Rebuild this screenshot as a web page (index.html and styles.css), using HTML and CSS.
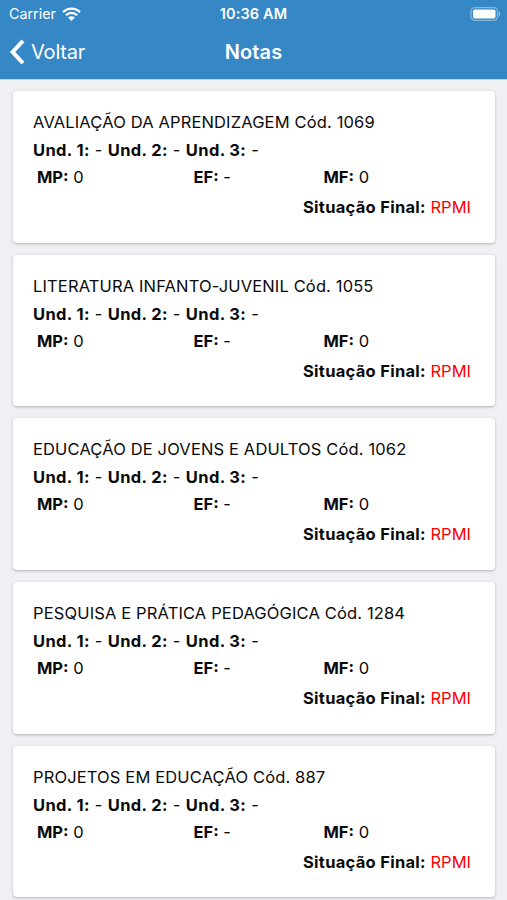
FILE: index.html
```html
<!DOCTYPE html>
<html lang="pt-BR">
<head>
    <meta charset="UTF-8">
    <meta name="viewport" content="width=device-width, initial-scale=1.0">
    <title>Notas</title>
    <link rel="stylesheet" href="styles.css">
</head>
<body>
    <header class="header">
        <div class="status-bar">
            <div class="carrier">
                <span>Carrier</span>
                <svg viewBox="0 0 19 14" width="19" height="14">
                    <path d="M1 5.100a12 12 0 0 1 17 0M3.900 8.200a8 8 0 0 1 11.200 0" fill="none" stroke="#fff" stroke-width="2.300"/>
                    <path d="M6.100 10.600a4.800 4.800 0 0 1 6.800 0L9.500 14z" fill="#fff"/>
                </svg>
            </div>
            <span class="clock">10:36 AM</span>
            <svg class="battery" viewBox="0 0 31 14" width="31" height="14">
                <rect x="1" y="0.700" width="26.500" height="12.600" rx="3.800" fill="none" stroke="#fff" stroke-opacity="0.4" stroke-width="1.300"/>
                <rect x="3" y="2.500" width="22.500" height="9" rx="1.800" fill="#fff"/>
                <path d="M28.800 4.600c2 .9 2 3.900 0 4.800z" fill="#fff" fill-opacity="0.5"/>
            </svg>
        </div>
        <nav class="nav-bar">
            <a class="back">
                <svg viewBox="0 0 16 26" width="16" height="26">
                    <path d="M14 1.900L3.600 13 14 24.100" fill="none" stroke="#fff" stroke-width="4"/>
                </svg>
                <span>Voltar</span>
            </a>
            <h1 class="title">Notas</h1>
        </nav>
    </header>
    <main class="list">
        <div class="card">
            <p class="subject">AVALIAÇÃO DA APRENDIZAGEM Cód. 1069</p>
            <p class="units"><b>Und. 1:</b> - <b>Und. 2:</b> - <b>Und. 3:</b> -</p>
            <div class="grades"><span><b>MP:</b> 0</span><span><b>EF:</b> -</span><span><b>MF:</b> 0</span></div>
            <p class="final"><b>Situação Final:</b> <span class="status">RPMI</span></p>
        </div>
        <div class="card">
            <p class="subject">LITERATURA INFANTO-JUVENIL Cód. 1055</p>
            <p class="units"><b>Und. 1:</b> - <b>Und. 2:</b> - <b>Und. 3:</b> -</p>
            <div class="grades"><span><b>MP:</b> 0</span><span><b>EF:</b> -</span><span><b>MF:</b> 0</span></div>
            <p class="final"><b>Situação Final:</b> <span class="status">RPMI</span></p>
        </div>
        <div class="card">
            <p class="subject">EDUCAÇÃO DE JOVENS E ADULTOS Cód. 1062</p>
            <p class="units"><b>Und. 1:</b> - <b>Und. 2:</b> - <b>Und. 3:</b> -</p>
            <div class="grades"><span><b>MP:</b> 0</span><span><b>EF:</b> -</span><span><b>MF:</b> 0</span></div>
            <p class="final"><b>Situação Final:</b> <span class="status">RPMI</span></p>
        </div>
        <div class="card">
            <p class="subject">PESQUISA E PRÁTICA PEDAGÓGICA Cód. 1284</p>
            <p class="units"><b>Und. 1:</b> - <b>Und. 2:</b> - <b>Und. 3:</b> -</p>
            <div class="grades"><span><b>MP:</b> 0</span><span><b>EF:</b> -</span><span><b>MF:</b> 0</span></div>
            <p class="final"><b>Situação Final:</b> <span class="status">RPMI</span></p>
        </div>
        <div class="card">
            <p class="subject">PROJETOS EM EDUCAÇÃO Cód. 887</p>
            <p class="units"><b>Und. 1:</b> - <b>Und. 2:</b> - <b>Und. 3:</b> -</p>
            <div class="grades"><span><b>MP:</b> 0</span><span><b>EF:</b> -</span><span><b>MF:</b> 0</span></div>
            <p class="final"><b>Situação Final:</b> <span class="status">RPMI</span></p>
        </div>
    </main>
</body>
</html>
```
FILE: styles.css
```css
* {
    box-sizing: border-box;
}
body {
    margin: 0;
    height: 900px;
    overflow: hidden;
    background: #efeff4;
    color: #0a0a0a;
    font-family: Inter, "Liberation Sans", sans-serif;
}
p, h1 {
    margin: 0;
}
.header {
    height: 80px;
    background: #3587c6;
    border-bottom: 1px solid #b5daf3;
    color: #fff;
}
.status-bar {
    display: grid;
    grid-template-columns: 1fr auto 1fr;
    align-items: center;
    height: 27px;
    padding: 0 6px 0 9px;
    font-size: 14.5px;
}
.carrier {
    display: flex;
    align-items: center;
    gap: 6px;
    font-size: 14.3px;
}
.clock {
    font-weight: 600;
    letter-spacing: 0.15px;
    margin-right: 3px;
}
.battery {
    justify-self: end;
}
.nav-bar {
    display: grid;
    grid-template-columns: 1fr auto 1fr;
    align-items: center;
    height: 50px;
    padding: 0 9px;
}
.back {
    display: flex;
    align-items: center;
    gap: 6px;
    font-size: 20px;
    letter-spacing: -0.2px;
}
.title {
    font-size: 20px;
    font-weight: 600;
    letter-spacing: 0.1px;
}
.list {
    display: flex;
    flex-direction: column;
    gap: 12px;
    padding: 11px 12px 0 13px;
}
.card {
    height: 151.7px;
    flex-shrink: 0;
    padding: 17px 24px 0 20px;
    background: #fff;
    border-radius: 4px;
    box-shadow: 0 1px 3px rgba(0, 0, 0, 0.25);
    font-size: 16.5px;
    white-space: nowrap;
}
.subject {
    line-height: 28px;
    letter-spacing: 0.14px;
}
.units {
    line-height: 28px;
    letter-spacing: 0.36px;
}
.grades {
    display: grid;
    grid-template-columns: 156.5px 130px 1fr;
    padding-left: 4px;
    line-height: 26px;
}
.final {
    line-height: 35.5px;
    text-align: right;
}
.final b {
    letter-spacing: 0.28px;
}
.status {
    color: #f00;
}
```
